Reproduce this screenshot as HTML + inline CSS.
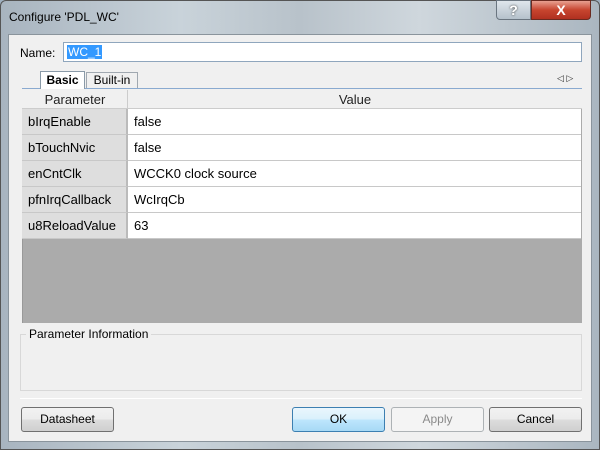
<!DOCTYPE html><html><head><style>
*{margin:0;padding:0;box-sizing:border-box}
body{width:600px;height:450px;overflow:hidden;font-family:"Liberation Sans",sans-serif;font-size:12px;background:#9fb0c0;position:relative}
.frame{position:absolute;left:0;top:0;width:600px;height:450px;background:linear-gradient(90deg,#a8b4bf,#c9d3da 30%,#b8c2ca 50%,#cfd7dd 70%,#aab6c0);border:1px solid #555;border-radius:6px 6px 0 0}
.title{position:absolute;left:9px;top:10px;font-size:12px;color:#000}
.client{position:absolute;left:8px;top:34px;width:584px;height:408px;background:#f0f0f0;border:1px solid #8a949c}
.btnq{position:absolute;left:496px;top:0;width:35px;height:20px;border:1px solid #6a7580;border-radius:0 0 0 4px;background:linear-gradient(#dfe6ec,#b5c1cb);text-align:center;color:#fff;font-weight:bold;font-size:14px;line-height:18px;text-shadow:0 0 2px #333}
.btnx{position:absolute;left:531px;top:0;width:60px;height:20px;border:1px solid #6a2a20;border-radius:0 0 4px 0;background:linear-gradient(#e8a090,#c7452f 50%,#b03020);text-align:center;color:#fff;font-weight:bold;font-size:14px;line-height:18px}
.a{position:absolute}
.cell{position:absolute;height:26px;line-height:26px;padding-left:6px;font-size:13px;border-bottom:1px solid #c8c8c8}
.btn{position:absolute;top:407px;height:25px;border:1px solid #707070;border-radius:3px;background:linear-gradient(#f2f2f2,#ebebeb 50%,#dddddd 50%,#cfcfcf);text-align:center;line-height:23px;font-size:12px}
</style></head><body>
<div class="frame"></div>
<div class="title">Configure 'PDL_WC'</div>
<div class="btnq">?</div><div class="btnx">X</div>
<div class="client"></div>
<div class="a" style="left:20px;top:46px;font-size:12px">Name:</div>
<div class="a" style="left:63px;top:42px;width:519px;height:20px;border:1px solid #8fa6bd;background:#fff"><span style="position:absolute;left:3px;top:2px;background:#3399ff;color:#fff;padding:0 1px;line-height:14px">WC_1</span></div>
<div class="a" style="left:22px;top:88px;width:560px;height:1px;background:#8aaad0"></div>
<div class="a" style="left:40px;top:71px;width:45px;height:18px;border:1px solid #8a9aa8;border-bottom:none;background:#fff;font-weight:bold;text-align:center;line-height:16px">Basic</div>
<div class="a" style="left:86px;top:72px;width:52px;height:16px;border:1px solid #a0a8b0;border-bottom:none;background:#f0f0f0;text-align:center;line-height:15px">Built-in</div>
<div class="a" style="left:557px;top:73px;font-size:9px;color:#333">◁ ▷</div>
<div class="a" style="left:22px;top:90px;width:560px;height:233px;background:#ababab;border-left:1px solid #999"></div>
<div class="a" style="left:22px;top:90px;width:560px;height:19px;background:#f0f0f0;border-bottom:1px solid #ccc"></div>
<div class="a" style="left:22px;top:92px;width:106px;text-align:center;font-size:13px;color:#222">Parameter</div>
<div class="a" style="left:127px;top:90px;width:1px;height:19px;background:#ccc"></div>
<div class="a" style="left:128px;top:92px;width:454px;text-align:center;font-size:13px;color:#222">Value</div>
<div class="cell" style="left:22px;top:109px;width:106px;background:#dedede;border-right:2px solid #bbb">bIrqEnable</div><div class="cell" style="left:128px;top:109px;width:453px;background:#fff">false</div>
<div class="cell" style="left:22px;top:135px;width:106px;background:#dedede;border-right:2px solid #bbb">bTouchNvic</div><div class="cell" style="left:128px;top:135px;width:453px;background:#fff">false</div>
<div class="cell" style="left:22px;top:161px;width:106px;background:#dedede;border-right:2px solid #bbb">enCntClk</div><div class="cell" style="left:128px;top:161px;width:453px;background:#fff">WCCK0 clock source</div>
<div class="cell" style="left:22px;top:187px;width:106px;background:#dedede;border-right:2px solid #bbb">pfnIrqCallback</div><div class="cell" style="left:128px;top:187px;width:453px;background:#fff">WcIrqCb</div>
<div class="cell" style="left:22px;top:213px;width:106px;background:#dedede;border-right:2px solid #bbb">u8ReloadValue</div><div class="cell" style="left:128px;top:213px;width:453px;background:#fff">63</div>
<div class="a" style="left:20px;top:334px;width:562px;height:57px;border:1px solid #d8d8d8"></div>
<div class="a" style="left:26px;top:327px;background:#f0f0f0;padding:0 3px;font-size:12px">Parameter Information</div>
<div class="a" style="left:20px;top:398px;width:562px;height:1px;background:#a0a0a0;border-bottom:1px solid #fff"></div>
<div class="btn" style="left:21px;width:93px">Datasheet</div>
<div class="btn" style="left:292px;width:93px;border-color:#3c7fb1;background:linear-gradient(#eaf6fd,#d9f0fc 50%,#bee6fd 50%,#a7d9f5)">OK</div>
<div class="btn" style="left:391px;width:93px;border-color:#adb2b5;background:#f4f4f4;color:#8a8a8a">Apply</div>
<div class="btn" style="left:489px;width:93px">Cancel</div>
</body></html>
